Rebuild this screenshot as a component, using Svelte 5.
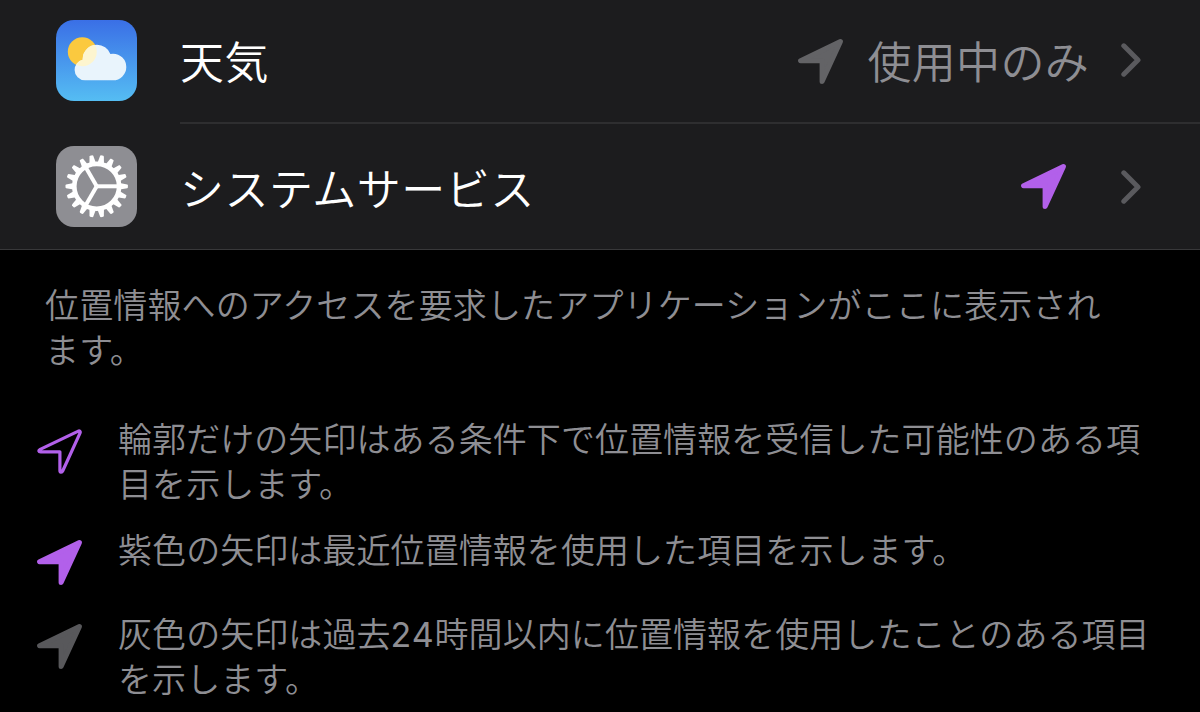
<script lang="ts">
	interface LegendItem {
		kind: 'outline' | 'purple' | 'gray';
		text: string;
	}

	const legend: LegendItem[] = [
		{
			kind: 'outline',
			text: '輪郭だけの矢印はある条件下で位置情報を受信した可能性のある項\n目を示します。'
		},
		{ kind: 'purple', text: '紫色の矢印は最近位置情報を使用した項目を示します。' },
		{
			kind: 'gray',
			text: '灰色の矢印は過去24時間以内に位置情報を使用したことのある項目\nを示します。'
		}
	];

	const TEETH = 18;
	const teeth = Array.from({ length: TEETH }, (_, i) => (i * 360) / TEETH);

	// odd entries are the runs of digits
	function splitDigits(text: string): string[] {
		return text.split(/(\d+)/);
	}
</script>

{#snippet arrow(kind: string)}
	<svg class="arrow {kind}" viewBox="0 0 45 45" aria-hidden="true">
		{#if kind === 'outline'}
			<path
				d="M40.8 2.4 L3.2 20.4 Q1.8 21.2 1.9 22 Q2.1 22.8 3.6 22.8 H22.9 V41.2 Q22.9 43 24 43.2 Q25.1 43.3 25.8 41.8 L43 4.2 Q43.6 2.8 42.8 2.1 Q42.1 1.7 40.8 2.4 Z"
			/>
		{:else}
			<path d="M42.4 2.6 L2.6 21.8 H24.1 V42.4 Z" />
		{/if}
	</svg>
{/snippet}

{#snippet chevron()}
	<svg class="chevron" viewBox="0 0 20 34" aria-hidden="true">
		<path d="M2.8 2.8 L17 17 L2.8 31.2" />
	</svg>
{/snippet}

<main>
	<section class="list">
		<button class="row">
			<svg class="app-icon" viewBox="0 0 81 81" aria-hidden="true">
				<defs>
					<linearGradient id="sky" x1="0" y1="0" x2="0" y2="1">
						<stop offset="0" stop-color="#3a6fe6" />
						<stop offset="1" stop-color="#55bdf3" />
					</linearGradient>
					<clipPath id="cloud">
						<circle cx="41" cy="39" r="14.3" />
						<circle cx="29" cy="49.9" r="10.4" />
						<circle cx="57" cy="47" r="13.3" />
						<rect x="29" y="42" width="28" height="18.3" />
					</clipPath>
				</defs>
				<rect width="81" height="81" rx="18" fill="url(#sky)" />
				<circle cx="26.3" cy="31.7" r="14.5" fill="#fbc93f" />
				<g clip-path="url(#cloud)">
					<rect width="81" height="81" fill="#e9f4fc" />
					<circle cx="26.3" cy="31.7" r="14.5" fill="#fdf5cf" />
				</g>
			</svg>
			<span class="body">
				<span class="title">天気</span>
				{@render arrow('gray')}
				<span class="value">使用中のみ</span>
				{@render chevron()}
			</span>
		</button>
		<button class="row">
			<svg class="app-icon" viewBox="0 0 81 81" aria-hidden="true">
				<rect width="81" height="81" rx="18" fill="#8e8e93" />
				<g transform="translate(40.7 40.3)" fill="#fff">
					{#each teeth as angle}
						<path d="M23 -3.3 L30.6 -1.9 L31.2 -1.2 V1.2 L30.6 1.9 L23 3.3 Z" transform="rotate({angle})" />
					{/each}
					<circle r="22.4" fill="none" stroke="#fff" stroke-width="4.6" />
					{#each [0, 120, 240] as angle}
						<path d="M0 0 H22" stroke="#fff" stroke-width="4" transform="rotate({angle})" />
					{/each}
				</g>
			</svg>
			<span class="body">
				<span class="title">システムサービス</span>
				{@render arrow('purple')}
				{@render chevron()}
			</span>
		</button>
	</section>

	<p class="note">位置情報へのアクセスを要求したアプリケーションがここに表示され<br />ます。</p>

	<ul class="legend">
		{#each legend as item}
			<li>
				{@render arrow(item.kind)}
				<span class="text">{#each splitDigits(item.text) as part, i}{#if i % 2}<span class="digits">{part}</span>{:else}{part}{/if}{/each}</span>
			</li>
		{/each}
	</ul>
</main>

<style>
	:global(body) {
		background: #000;
	}

	main {
		width: 1200px;
		height: 712px;
		overflow: hidden;
		background: #000;
		color: #8e8e93;
		font-family: Inter, 'Noto Sans CJK JP', sans-serif;
		font-weight: 350;
	}

	.list {
		box-sizing: border-box;
		height: 250px;
		background: #1c1c1e;
		border-bottom: 1px solid #38383a;
		display: flex;
		flex-direction: column;
		justify-content: flex-end;
	}

	.row {
		display: flex;
		flex-shrink: 0;
		align-items: center;
		width: 100%;
		height: 125px;
		padding: 0 0 0 56px;
		border: none;
		background: none;
		color: inherit;
		font: inherit;
		text-align: left;
	}

	.row:first-child {
		height: 127px;
	}

	.app-icon {
		width: 81px;
		height: 81px;
		margin-right: 43px;
	}

	.body {
		flex: 1;
		display: flex;
		align-items: center;
		box-sizing: border-box;
		height: 100%;
		padding-right: 59px;
	}

	.row:first-child .body {
		border-bottom: 2px solid #2e2e30;
	}

	.title,
	.value {
		padding-top: 1px;
		font-size: 44px;
	}

	.title {
		flex: 1;
		color: #fff;
		letter-spacing: 0.5px;
	}

	.value {
		margin-left: 25px;
		letter-spacing: 0.3px;
	}

	.arrow {
		flex-shrink: 0;
		width: 45px;
		height: 45px;
		stroke-linejoin: round;
		stroke-width: 5;
	}

	.arrow.gray {
		fill: #636366;
		stroke: #636366;
	}

	.row .arrow.gray {
		margin-top: 4px;
	}

	.arrow.purple {
		fill: #b260ea;
		stroke: #b260ea;
	}

	.arrow.outline {
		fill: none;
		stroke: #b260ea;
		stroke-width: 3.2;
	}

	.chevron {
		width: 20px;
		height: 34px;
		margin-left: 32px;
		fill: none;
		stroke: #5a5a5e;
		stroke-width: 5;
		stroke-linecap: round;
		stroke-linejoin: round;
	}

	.row:last-child .chevron {
		margin-left: 55px;
	}

	.note {
		margin: 33px 0 0 45px;
		font-size: 34px;
		line-height: 45px;
		letter-spacing: 0.13px;
		white-space: nowrap;
	}

	.legend {
		display: flex;
		flex-direction: column;
		gap: 21px;
		margin: 44px 0 0;
		padding: 0 0 0 37px;
		list-style: none;
		font-size: 34px;
		line-height: 45px;
		letter-spacing: 0.07px;
	}

	.legend li {
		display: flex;
		align-items: flex-start;
		min-height: 63px;
	}

	.legend .arrow {
		margin: 12px 36px 0 0;
	}

	.legend .arrow.gray {
		fill: #58585b;
		stroke: #58585b;
	}

	.text {
		white-space: pre;
	}

	.digits {
		font-weight: 400;
		letter-spacing: 0.9px;
	}
</style>
